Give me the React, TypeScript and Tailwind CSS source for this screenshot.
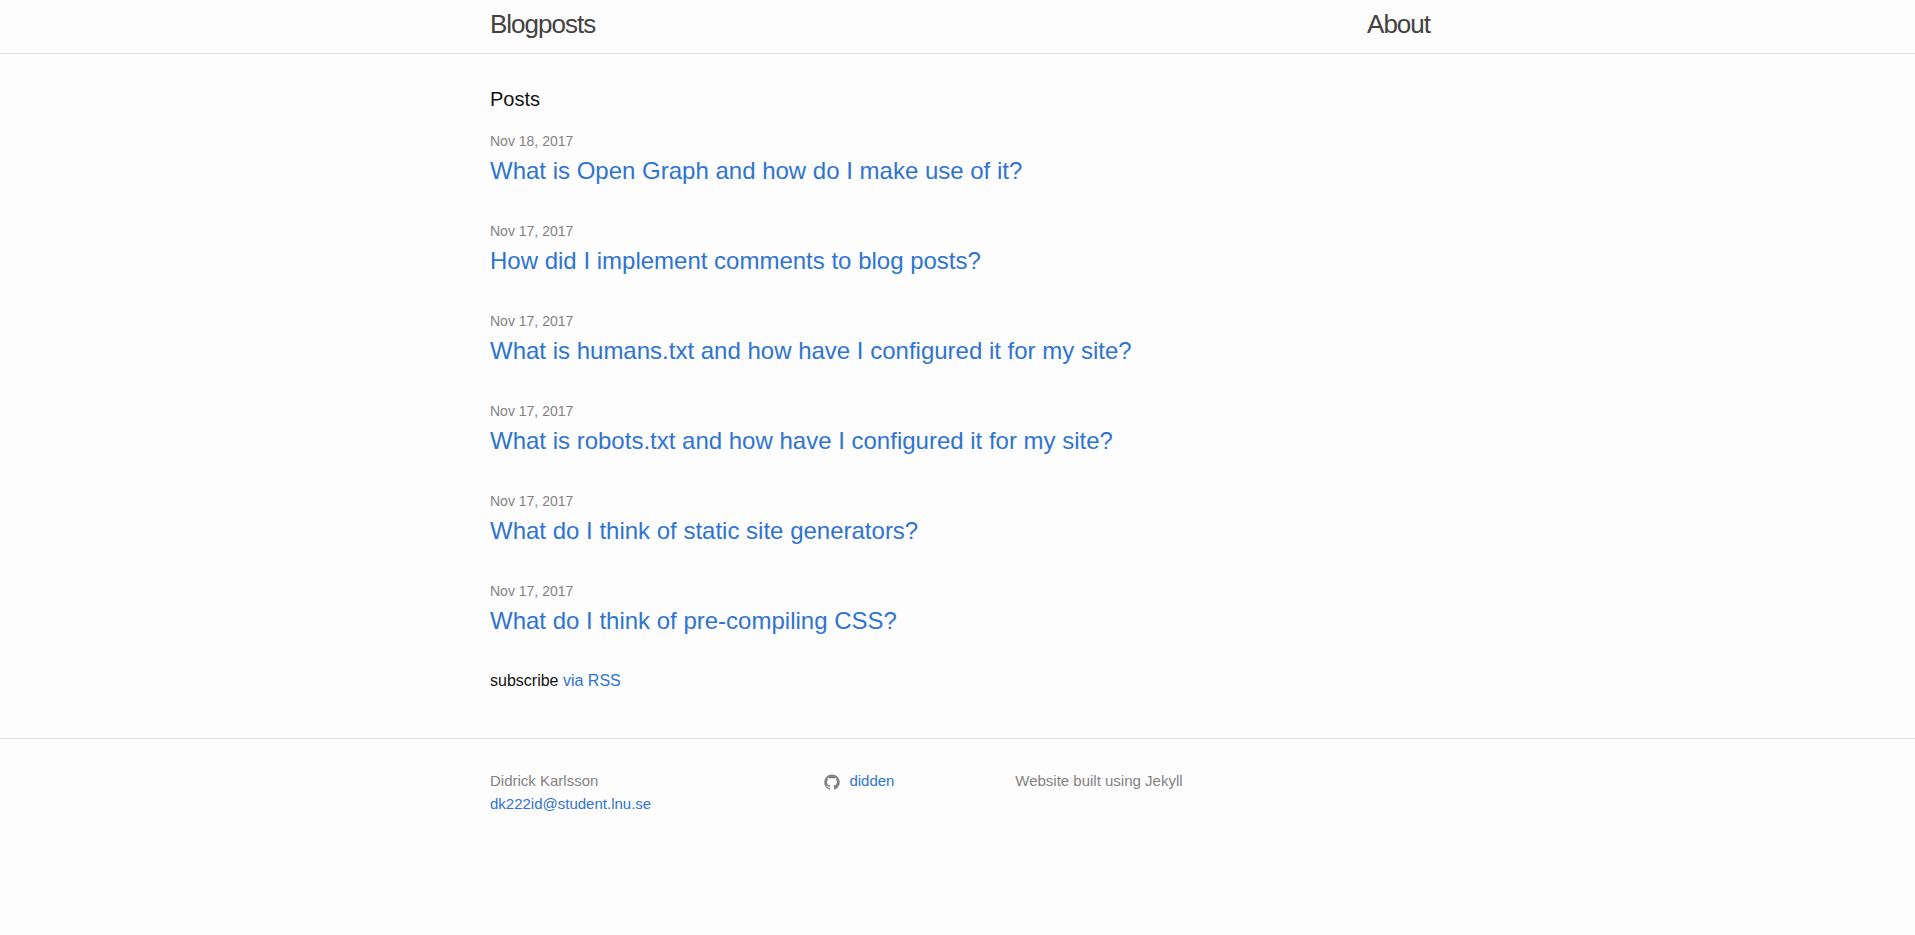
import type { ReactNode } from "react";

type Post = { date: string; title: string };

const posts: Post[] = [
  { date: "Nov 18, 2017", title: "What is Open Graph and how do I make use of it?" },
  { date: "Nov 17, 2017", title: "How did I implement comments to blog posts?" },
  { date: "Nov 17, 2017", title: "What is humans.txt and how have I configured it for my site?" },
  { date: "Nov 17, 2017", title: "What is robots.txt and how have I configured it for my site?" },
  { date: "Nov 17, 2017", title: "What do I think of static site generators?" },
  { date: "Nov 17, 2017", title: "What do I think of pre-compiling CSS?" },
];

function Wrapper({ children }: { children: ReactNode }) {
  return (
    <div className="pl-[5px]">
      <div className="mx-auto max-w-[1000px] px-[30px]">{children}</div>
    </div>
  );
}

function GithubIcon() {
  return (
    <svg viewBox="0 0 16 16" className="mr-[5px] inline-block h-4 w-4 fill-[#828282] align-middle" aria-hidden="true">
      <path d="M7.999,0.431c-4.285,0-7.76,3.474-7.76,7.761 c0,3.428,2.223,6.337,5.307,7.363c0.388,0.071,0.53-0.168,0.53-0.374c0-0.184-0.007-0.672-0.01-1.32 c-2.159,0.469-2.614-1.04-2.614-1.04c-0.353-0.896-0.862-1.135-0.862-1.135c-0.705-0.481,0.053-0.472,0.053-0.472 c0.779,0.055,1.189,0.8,1.189,0.8c0.692,1.186,1.816,0.843,2.258,0.645c0.071-0.502,0.271-0.843,0.493-1.037 C4.86,11.425,3.049,10.76,3.049,7.786c0-0.847,0.302-1.54,0.799-2.082C3.768,5.507,3.501,4.718,3.924,3.65 c0,0,0.652-0.209,2.134,0.796C6.677,4.273,7.34,4.187,8,4.184c0.659,0.003,1.323,0.089,1.943,0.261 c1.482-1.004,2.132-0.796,2.132-0.796c0.423,1.068,0.157,1.857,0.077,2.054c0.497,0.542,0.798,1.235,0.798,2.082 c0,2.981-1.814,3.637-3.543,3.829c0.279,0.24,0.527,0.713,0.527,1.437c0,1.037-0.01,1.874-0.01,2.129 c0,0.208,0.14,0.449,0.534,0.373c3.081-1.028,5.302-3.935,5.302-7.362C15.76,3.906,12.285,0.431,7.999,0.431z" />
    </svg>
  );
}

export default function App() {
  return (
    <div className="min-h-screen bg-[#fdfdfd] font-['Liberation_Sans',Arial,sans-serif] text-base leading-6 text-[#111]">
      <header className="border-b border-[#e8e8e8] pb-[5px]">
        <Wrapper>
          <div className="flex justify-between text-[26px] leading-[48px] tracking-[-1px] text-[#424242]">
            <a href="#home">Blogposts</a>
            <nav>
              <a href="#about">About</a>
            </nav>
          </div>
        </Wrapper>
      </header>

      <main className="py-[30px]">
        <Wrapper>
          <h1 className="mb-[15px] text-xl leading-[30px]">Posts</h1>
          <ul>
            {posts.map((post) => (
              <li key={post.title} className="mb-[30px]">
                <time className="block text-sm leading-6 text-[#828282]">{post.date}</time>
                <h2 className="text-2xl leading-9">
                  <a href="#post" className="text-[#2f74d0] hover:underline">
                    {post.title}
                  </a>
                </h2>
              </li>
            ))}
          </ul>
          <p className="mb-[15px]">
            subscribe{" "}
            <a href="#feed" className="text-[#2f74d0] hover:underline">
              via RSS
            </a>
          </p>
        </Wrapper>
      </main>

      <footer className="border-t border-[#e8e8e8] py-[30px] text-[15px] leading-[23px] text-[#828282]">
        <Wrapper>
          <div className="-ml-[15px] grid grid-cols-[35%_20%_45%]">
            <ul className="pl-[15px]">
              <li>Didrick Karlsson</li>
              <li>
                <a href="mailto:dk222id@student.lnu.se" className="text-[#2f74d0] hover:underline">
                  dk222id@student.lnu.se
                </a>
              </li>
            </ul>
            <div className="pl-[15px]">
              <a href="https://github.com/didden" className="text-[#2f74d0] hover:underline">
                <GithubIcon /> didden
              </a>
            </div>
            <p className="pl-[15px]">Website built using Jekyll</p>
          </div>
        </Wrapper>
      </footer>
    </div>
  );
}
